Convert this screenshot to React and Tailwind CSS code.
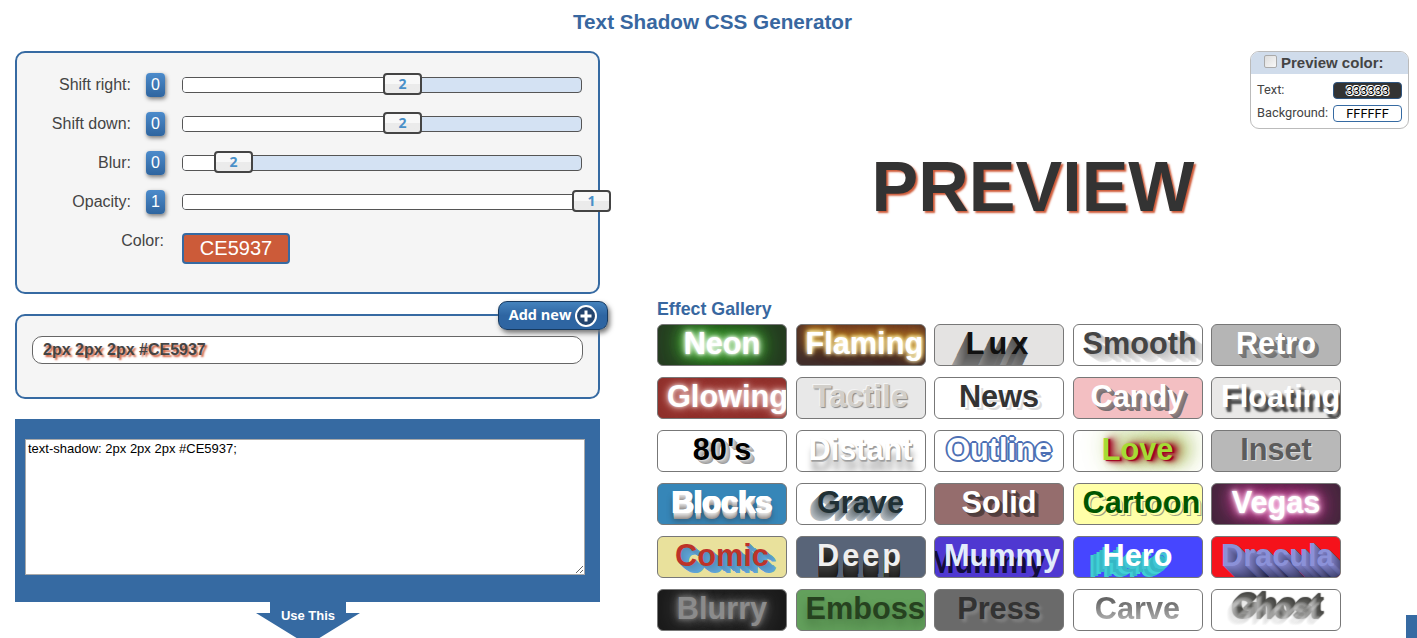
import React from "react";

// Stack of text-shadow layers along (dx, dy), fading between two grey/rgb values.
function trail(count, dx, dy, from, to, blur = 0) {
  return Array.from({ length: count }, (_, k) => {
    const t = count === 1 ? 0 : k / (count - 1);
    const c = from.map((v, n) => Math.round(v + (to[n] - v) * t));
    return `${(dx * (k + 1)).toFixed(1)}px ${(dy * (k + 1)).toFixed(1)}px ${blur}px rgb(${c.join(",")})`;
  }).join(", ");
}

function ghostTrail() {
  const layers = [];
  for (let s = -6; s <= 6; s++) {
    if (s <= 0) layers.push(`${s}px ${-s}px 1px rgba(215,215,215,0.2)`);
    else layers.push(`${s - 2}px ${-s + 1}px 1px rgb(${105 - s * 6},${105 - s * 6},${102 - s * 6})`);
  }
  return layers.join(", ");
}

const effects = [
  { name: "Neon", cls: "bg-[#263a22] text-white [text-shadow:0_0_3px_#fff,0_0_6px_#fff,0_0_10px_#9be08c,0_0_14px_#4fc03e,0_0_20px_#45b535,0_0_24px_#45b535,0_0_30px_#45b535,0_0_40px_#3da52f]" },
  { name: "Flaming", cls: "bg-[#42302c] text-white [text-shadow:0_0_4px_#fff,0_-1px_4px_#ffe860,1px_-3px_8px_#d8a828,0_-6px_14px_#b06a20,0_-10px_20px_#a8501c,0_-14px_24px_#a0481c]" },
  { name: "Lux", cls: "bg-[#e4e3e2] text-[#111] tracking-[4px]", shadow: trail(34, -0.48, 1, [88, 88, 88], [165, 165, 165]) },
  { name: "Smooth", cls: "bg-white text-[#444]", shadow: trail(12, 1, 0.7, [195, 195, 195], [235, 235, 235], 1) },
  { name: "Retro", cls: "bg-[#b5b5b5] text-white", shadow: trail(4, 1, 1, [125, 125, 125], [115, 115, 115]) },
  { name: "Glowing", cls: "bg-[#8f302b] text-white [text-shadow:0_0_3px_#fff9,0_0_6px_#fffb,0_0_11px_#d88882,0_0_16px_#a83a34]" },
  { name: "Tactile", cls: "bg-[#e8e8e8] text-[#d2cfca] [text-shadow:-1px_-1px_0_#f4f4f4,1px_1px_1px_#888]" },
  { name: "News", cls: "bg-white text-[#333] [text-shadow:2px_1px_0_#fff,4px_3px_0_#ddd]" },
  { name: "Candy", cls: "bg-[#f3bfc2] text-white", shadow: trail(4, 1, 1, [145, 130, 132], [120, 112, 114]) },
  { name: "Floating", cls: "bg-[#e9e8e7] text-white [text-shadow:4px_5px_2px_#4a4a4a,3px_3px_2px_#888]" },
  { name: "80's", cls: "bg-white text-black", shadow: trail(5, 0.9, 0.7, [215, 215, 215], [160, 160, 160]) },
  { name: "Distant", cls: "bg-white text-white [text-shadow:1px_1px_1px_#999,1px_2px_0_#b0b0b0,2px_11px_6px_#aaa]" },
  { name: "Outline", cls: "bg-white text-white [text-shadow:2px_0_0_#4d70b4,-2px_0_0_#4d70b4,0_2px_0_#4d70b4,0_-2px_0_#4d70b4,1px_1px_0_#4d70b4,-1px_-1px_0_#4d70b4,1px_-1px_0_#4d70b4,-1px_1px_0_#4d70b4]" },
  { name: "Love", cls: "bg-white text-[#a5dc35] [text-shadow:2px_1px_1px_#a00020,4px_1px_4px_#a00020,7px_0_8px_#a01028,12px_0_18px_#7b9a00,16px_-4px_28px_#86aa20,10px_-4px_34px_#86aa20]" },
  { name: "Inset", cls: "bg-[#b8b8b8] text-[#5c5c5c] [text-shadow:1px_1px_0_#dedede]" },
  { name: "Blocks", cls: "bg-[#3686b8] text-white", shadow: "-1px 0 0 #fff, 1px 0 0 #fff, " + trail(6, 0, 1, [225, 225, 225], [155, 150, 148]) + ", 0 7px 6px #345" },
  { name: "Grave", cls: "bg-white text-[#203035]", shadow: trail(8, -1, 1, [110, 122, 130], [180, 188, 194]) },
  { name: "Solid", cls: "bg-[#956d6d] text-white", shadow: trail(4, 1, 1, [75, 60, 60], [90, 65, 65]) },
  { name: "Cartoon", cls: "bg-[#ffffa8] text-[#005500] [text-shadow:1px_1px_0_#ffffa8,2px_2px_0_#ffffa8,3px_3px_0_#9d9d82]" },
  { name: "Vegas", cls: "bg-[#43283c] text-white [text-shadow:0_0_3px_#fff,0_0_6px_#ffd8f2,0_0_10px_#f088c8,0_0_16px_#e050a8,0_0_22px_#d03c98,0_0_26px_#d03c98,0_0_38px_#b82a80]" },
  { name: "Comic", cls: "bg-[#e9e19c] text-[#bd3329]", shadow: trail(8, 1, 0.9, [85, 145, 190], [95, 165, 215]) },
  { name: "Deep", cls: "bg-[#586478] text-[#efefef] tracking-[3px]", shadow: trail(16, 0, 1, [58, 58, 58], [24, 24, 24]) },
  { name: "Mummy", cls: "bg-[#4f38d1] text-[#e2ecfb] [text-shadow:-15px_7px_0_#120d3c]" },
  { name: "Hero", cls: "bg-[#4646ff] text-white [text-shadow:-2px_3px_0_#42c5d2,-5px_6px_0_#35b8c5,-8px_8px_0_#40d0d5,-11px_10px_0_#35b8c5,-14px_11px_0_#40ced6]" },
  { name: "Dracula", cls: "bg-[#f5121b] text-[#8b91d8]", shadow: trail(19, 1, 1, [120, 122, 190], [30, 32, 66]) },
  { name: "Blurry", cls: "bg-[#1b1b1b] text-[#8b8b8b] [text-shadow:0_0_4px_#777,0_0_8px_#777,0_0_18px_#777]" },
  { name: "Emboss", cls: "bg-[#63a05c] text-[#26421f] [text-shadow:1px_1px_1px_#578b50,0_7px_10px_#4a7c43]" },
  { name: "Press", cls: "bg-[#6a6a6a] text-[#333] [text-shadow:3px_3px_3px_#828282]" },
  { name: "Carve", cls: "bg-white", inner: "bg-linear-to-b from-[#666] from-25% to-[#aaa] to-80% bg-clip-text text-transparent" },
  { name: "Ghost", cls: "bg-white text-transparent", shadow: ghostTrail() },
];

function Slider({ label, min, value, left }) {
  return (
    <div className="flex h-[39px] items-center">
      <div className="w-[114px] text-right text-base leading-[20px]">{label}</div>
      <div className="ml-[15px] flex h-6 w-[19px] items-center justify-center rounded-[4px] bg-linear-to-b from-[#4c8bcb] to-[#2f659f] text-base text-white shadow-[1px_2px_4px_#777]">
        {min}
      </div>
      <div className="relative ml-[17px] h-4 w-[400px] rounded-[4px] border border-[#555] bg-[#d4e2f3]">
        <div className="h-full rounded-l-[3px] bg-white" style={{ width: Math.min(left + 8, 398) }} />
        <div
          className="absolute -top-[5px] flex h-[22px] w-[39px] items-center justify-center rounded-[4px] border-2 border-[#444] bg-linear-to-b from-[#f8f8f8] from-50% to-[#ebebeb] to-50% font-['Open_Sans',sans-serif] text-sm font-bold text-[#4a90c8]"
          style={{ left: left - 1 }}
        >
          {value}
        </div>
      </div>
    </div>
  );
}

function PreviewColor() {
  return (
    <div className="h-[78px] w-[159px] overflow-hidden rounded-[9px] border border-[#bbb] bg-white">
      <div className="flex h-[22px] items-center gap-[4px] bg-[#d0dceb] pl-[13px]">
        <span className="-mt-[3px] h-[13px] w-[13px] rounded-[2px] border border-[#aaa] bg-linear-to-br from-[#ddd] to-[#f8f8f8]" />
        <span className="text-[15px] leading-[22px] font-bold">Preview color:</span>
      </div>
      <div className="flex flex-col gap-[6px] pt-2 pr-[6px] pl-[6px] font-[Roboto,sans-serif] text-[12.8px] leading-[17px]">
        <div className="flex h-[17px] items-center justify-between">
          <span className="-mt-[2px]">Text:</span>
          <span className="h-[17px] w-[69px] rounded-[4px] border border-[#2f5580] bg-[#333] text-center leading-[15px] text-black [text-shadow:1px_0_0_#fff,-1px_0_0_#fff,0_1px_0_#fff,0_-1px_0_#fff,1px_1px_0_#fff,-1px_-1px_0_#fff]">
            333333
          </span>
        </div>
        <div className="flex h-[17px] items-center justify-between">
          <span className="-mt-[2px]">Background:</span>
          <span className="h-[17px] w-[69px] rounded-[4px] border border-[#366aa2] bg-white text-center leading-[15px] text-black">FFFFFF</span>
        </div>
      </div>
    </div>
  );
}

export default function App() {
  return (
    <div className="relative h-[638px] w-[1417px] overflow-hidden bg-white font-['Liberation_Sans',Arial,sans-serif] text-[#444]">
      <h1 className="h-[51px] pt-[9px] pl-[8px] text-center text-[20.7px] leading-[25px] font-bold text-[#3867a0]">
        Text Shadow CSS Generator
      </h1>
      <div className="flex pl-[15px]">
        <div className="flex w-[585px] flex-col">
          <section className="h-[243px] rounded-[10px] border-2 border-[#366aa2] bg-[#f5f5f5] pt-[12px]">
            <Slider label="Shift right:" min="0" value="2" left={201} />
            <Slider label="Shift down:" min="0" value="2" left={201} />
            <Slider label="Blur:" min="0" value="2" left={32} />
            <Slider label="Opacity:" min="1" value="1" left={390} />
            <div className="flex items-start">
              <div className="w-[147px] pt-[10px] text-right text-base leading-[20px]">Color:</div>
              <div className="mt-[12px] ml-[18px] h-[31px] w-[108px] rounded-[4px] border-2 border-[#366aa2] bg-[#cc5b39] text-center text-xl leading-[27px] text-white">
                CE5937
              </div>
            </div>
          </section>

          <section className="relative mt-5 h-[85px] rounded-[10px] border-2 border-[#366aa2] bg-[#f5f5f5] px-[15px] pt-5">
            <div className="h-7 rounded-[10px] border border-[#666] bg-white pl-[10px] text-base leading-[26px] font-bold [text-shadow:2px_2px_2px_#CE5937]">
              2px 2px 2px #CE5937
            </div>
            <button className="absolute -top-[15px] -right-[10px] flex h-[29px] w-[110px] items-center justify-center gap-1 rounded-[9px] border border-[#173a60] bg-linear-to-b from-[#4583bd] to-[#2e65a2] to-50% font-['Open_Sans',sans-serif] text-[14.5px] font-bold text-white shadow-[2px_3px_5px_#777]">
              <span className="-mt-[2px]">Add new</span>
              <svg width="22" height="22" viewBox="0 0 22 22">
                <circle cx="11" cy="11" r="10" fill="#24456f" stroke="#fff" strokeWidth="2" />
                <path d="M11 5.5v11M5.5 11h11" stroke="#fff" strokeWidth="3" />
              </svg>
            </button>
          </section>

          <section className="mt-5 h-[183px] bg-[#366aa2] px-[10px] pt-5">
            <textarea
              readOnly
              className="block h-[136px] w-[560px] resize border border-[#a9a9a9] bg-white px-[2px] pt-px text-[13px] leading-[15px] text-black outline-none"
              defaultValue="text-shadow: 2px 2px 2px #CE5937;"
            />
          </section>
          <div className="relative ml-[241px] h-9 w-[104px]">
            <svg className="block" width="104" height="44" viewBox="0 0 104 44">
              <path d="M14 0H90V11H104L52 43L0 11H14Z" fill="#366aa2" />
            </svg>
            <div className="absolute inset-x-0 top-[6px] text-center text-[13px] leading-[16px] font-bold text-white">Use This</div>
          </div>
        </div>

        <div className="ml-[57px] w-[752px]">
          <div className="flex h-[78px] justify-end">
            <PreviewColor />
          </div>
          <div className="mt-[18px] h-[80px] text-center text-[70px] leading-[80px] font-bold text-[#333] [text-shadow:2px_2px_2px_#CE5937]">
            PREVIEW
          </div>
          <h2 className="mt-[71px] h-[26px] text-[17.8px] leading-[22px] font-bold text-[#3867a0]">Effect Gallery</h2>
          <div className="grid w-[684px] grid-cols-5 gap-x-[8.5px] gap-y-[11px]">
            {effects.map((e) => (
              <div
                key={e.name}
                className={`h-[42px] w-[130px] overflow-hidden rounded-[6px] border border-[#777] px-[9px] text-center text-[30.7px] leading-[38px] font-bold whitespace-nowrap ${e.cls}`}
                style={e.shadow ? { textShadow: e.shadow } : undefined}
              >
                <span className={e.inner}>{e.name}</span>
              </div>
            ))}
          </div>
        </div>
      </div>
      <div className="absolute right-0 bottom-0 h-[23px] w-[11px] bg-[#366aa2]" />
    </div>
  );
}
